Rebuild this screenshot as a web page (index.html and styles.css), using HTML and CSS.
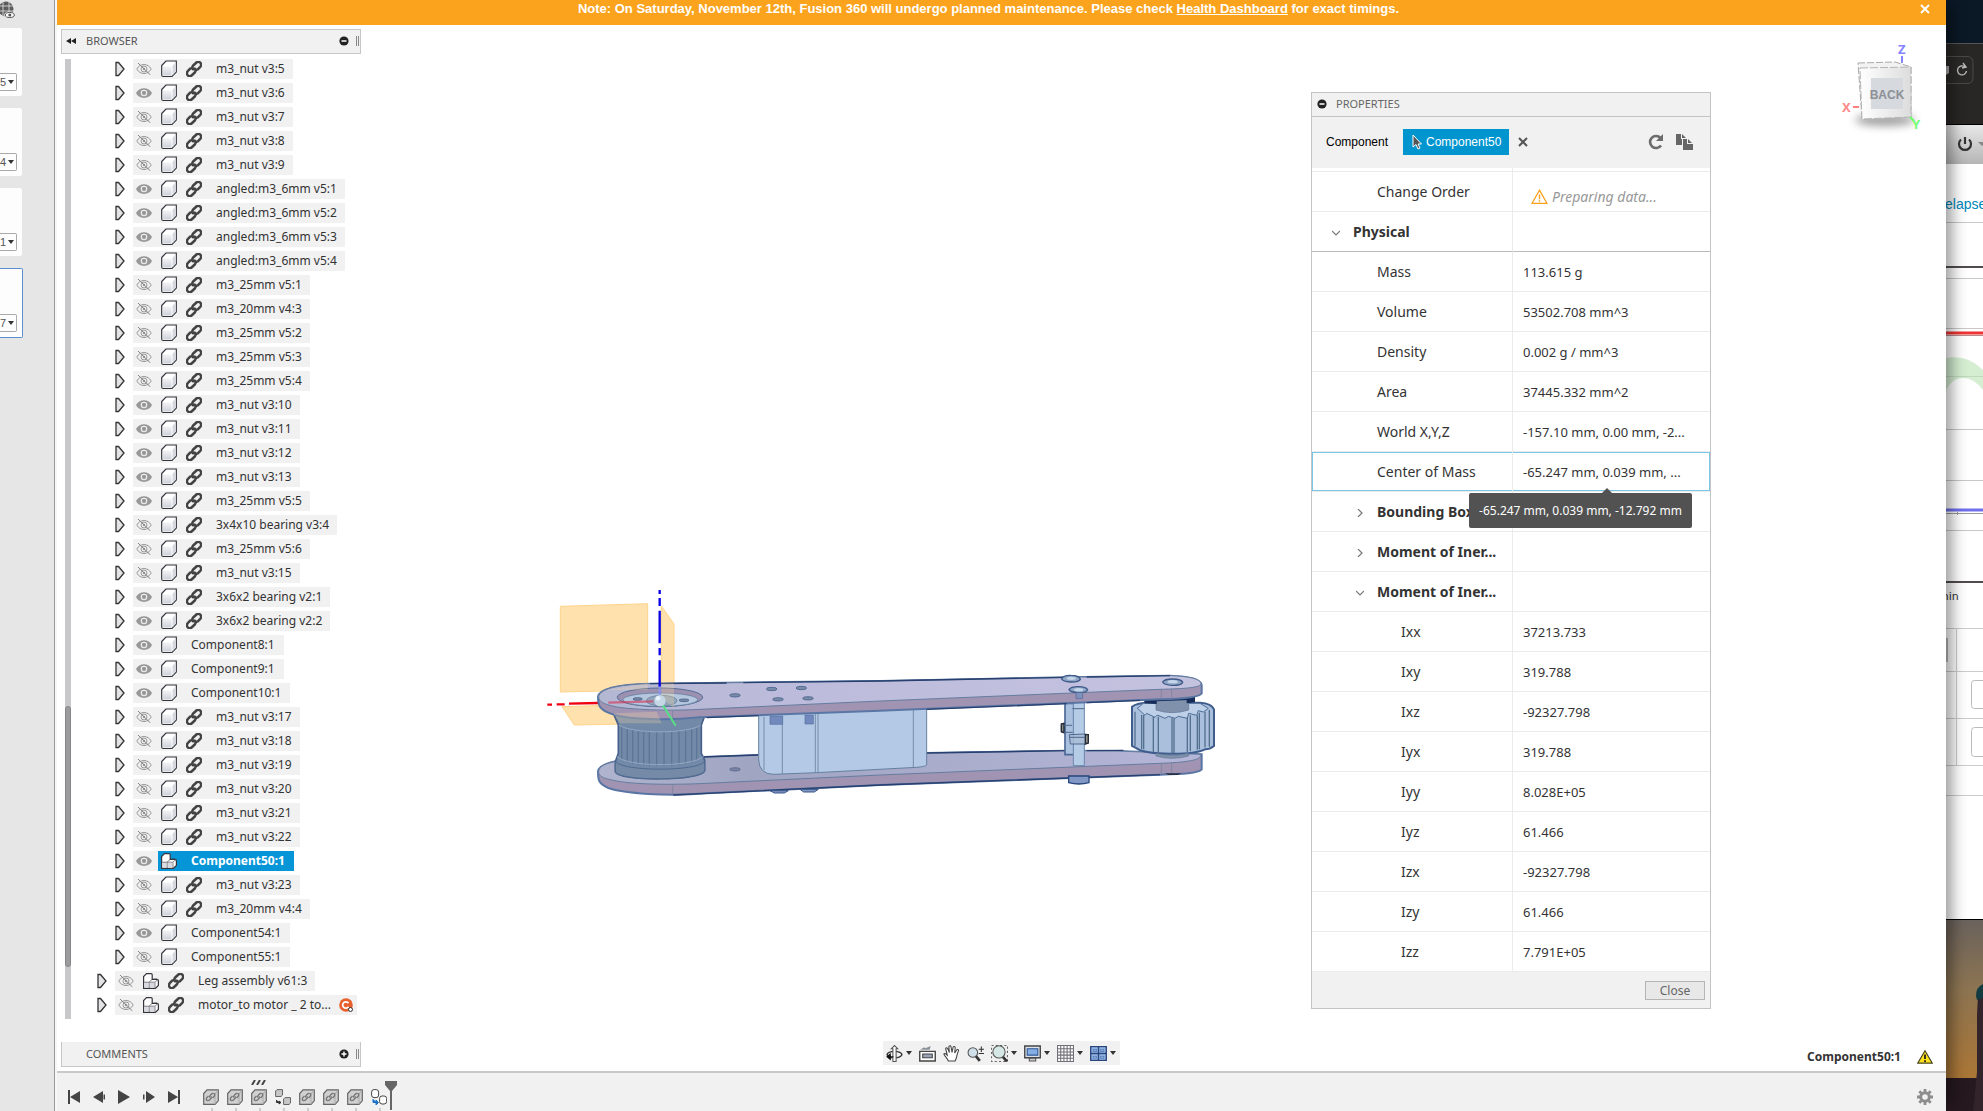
FILE: index.html
```html
<!DOCTYPE html>
<html lang="en">
<head>
<meta charset="utf-8">
<title>Fusion 360</title>
<link rel="stylesheet" href="styles.css">
<script src="app.js" defer></script>
</head>
<body>
<svg class="defs" aria-hidden="true">
  <linearGradient id="gCube" x1="0" y1="0" x2="0" y2="1"><stop offset="0" stop-color="#f4f4f6"/><stop offset="1" stop-color="#cfd1da"/></linearGradient>
  <linearGradient id="gTop" x1="0" y1="0" x2="1" y2="0"><stop offset="0" stop-color="#b3b7d2"/><stop offset=".3" stop-color="#bdbbdb"/><stop offset="1" stop-color="#c3c2df"/></linearGradient>
  <linearGradient id="gLow" x1="0" y1="0" x2="1" y2="0"><stop offset="0" stop-color="#b0b4cf"/><stop offset=".25" stop-color="#a0a5c2"/><stop offset="1" stop-color="#b6b6d8"/></linearGradient>
  <linearGradient id="gFace" x1="0" y1="0" x2="1" y2="0"><stop offset="0" stop-color="#fff"/><stop offset="1" stop-color="#dcdcdc"/></linearGradient>
  <linearGradient id="gSky" x1="0" y1="0" x2="0" y2="1"><stop offset="0" stop-color="#6a625c"/><stop offset=".35" stop-color="#8c7452"/><stop offset=".8" stop-color="#a97637"/><stop offset="1" stop-color="#b5802f"/></linearGradient>
  <symbol id="i-arrow" viewBox="0 0 10 16"><path d="M1 1.500h2.500L9 8l-5.500 6.500H1z" fill="#e4e4e6" stroke="#333" stroke-width="1.300"/></symbol>
  <symbol id="i-eye" viewBox="0 0 16 12"><path d="M0 6C3-.5 13-.5 16 6 13 12.500 3 12.500 0 6z" fill="#989898"/><circle cx="8" cy="6" r="2.700" fill="none" stroke="#f1f1f1" stroke-width="1.100"/></symbol>
  <symbol id="i-eyeoff" viewBox="0 0 16 12"><path d="M.8 6C4 0 12 0 15.200 6 12 12 4 12 .8 6z" fill="none" stroke="#999"/><circle cx="8" cy="6" r="3" fill="none" stroke="#999"/><circle cx="8" cy="6" r="1.200" fill="#999"/><path d="M2 0l12.500 12" stroke="#858585"/></symbol>
  <symbol id="i-cube" viewBox="0 0 16 18"><path d="M.7 5.500L5 1h10.300v11L11 16.500H2.200Q.7 16.500.7 15z" fill="#fff" stroke="#35353d" stroke-width="1.200"/><path d="M2 6.500h8.500V15.500H2z" fill="url(#gCube)"/><path d="M11.500 6L15 2v9.500l-3.500 4z" fill="#d6d7df"/></symbol>
  <symbol id="i-asm" viewBox="0 0 16 16"><path d="M.6 15.400V3.500L3.500.6h4.500q1.200 0 1.200 1.200v4.500l4-.2q2.200 0 2.200 2v4.300l-3 3z" fill="#fff" stroke="#35353d" stroke-width="1.200"/><path d="M1.500 9h4v5.500h-4zM6.800 9.800h4.700v5H6.800z" fill="#d9dae2"/><path d="M1 9.200h5L9 6.500M6.200 15V9.200h5.600l3-2.500M12 9.500V15" fill="none" stroke="#66666e" stroke-width=".8"/></symbol>
  <symbol id="i-link" viewBox=".6 .6 14.800 14.800"><g fill="none" stroke="#434343" stroke-width="2.300" stroke-linecap="round"><path d="M7.200 8.300C6 6.800 6.500 5.500 7.500 4.500L10 2.200C12.500 0 16.200 3 13.800 6L11.500 8.300 9.800 8.800"/><path d="M8.800 7.700C10 9.200 9.500 10.500 8.500 11.500L6 13.800C3.500 16-.2 13 2.200 10L4.500 7.700 6.200 7.200"/></g></symbol>
  <symbol id="i-feat" viewBox="0 0 16 16"><path d="M.7 4.500L4 .8h11.300v11L12 15.300H.7z" fill="#d0d0d0" stroke="#666" stroke-width="1.200"/><path d="M12 15V5l3-4" fill="none" stroke="#aaa"/><path d="M7 8.500c-1-1 0-2 1-3 2.500-2.500 5 0 3 2L9.500 9M8 7.500c1 1 0 2-1 3-2.500 2.500-5 0-3-2L5.500 7" fill="none" stroke="#777" stroke-width="1.400"/></symbol>
  <symbol id="i-minus" viewBox="0 0 10 10"><circle cx="5" cy="5" r="4.600" fill="#222"/><path d="M2.500 5h5" stroke="#fff" stroke-width="1.500"/></symbol>
  <symbol id="i-plus" viewBox="0 0 10 10"><circle cx="5" cy="5" r="4.600" fill="#222"/><path d="M2.500 5h5M5 2.500v5" stroke="#fff" stroke-width="1.400"/></symbol>
  <symbol id="i-down" viewBox="0 0 8 8"><path d="M0 2l4 4 4-4" fill="none" stroke="#777" stroke-width="1.200"/></symbol>
  <symbol id="i-right" viewBox="0 0 8 8"><path d="M2 0l4 4-4 4" fill="none" stroke="#777" stroke-width="1.200"/></symbol>
</svg>

<div class="desk">
  <aside class="pages">
    <svg class="globe" viewBox="0 0 15 18"><circle cx="6" cy="9" r="7.500" fill="#5c5c5c"/><path d="M-2 6h16M-2 11h16M3 0v18M9 0v18" stroke="#e6e6e6" fill="none" stroke-width=".8"/><ellipse cx="9.500" cy="15" rx="5.500" ry="3.500" fill="#e6e6e6"/><ellipse cx="9.800" cy="15" rx="4.500" ry="2.500" fill="#fff" stroke="#555"/><circle cx="9.800" cy="15" r="1.500" fill="#555"/></svg>
    <div class="page"><button>5<i></i></button></div>
    <div class="page"><button>4<i></i></button></div>
    <div class="page"><button>1<i></i></button></div>
    <div class="page current"><button>7<i></i></button></div>
  </aside>

  <main class="app">
    <div class="banner">
      <p>Note: On Saturday, November 12th, Fusion 360 will undergo planned maintenance. Please check <a href="#">Health Dashboard</a> for exact timings.</p>
      <button aria-label="Dismiss"><svg viewBox="0 0 10 10"><path d="M1 1l8 8M9 1L1 9" stroke="#fff" stroke-width="2"/></svg></button>
    </div>

    <div class="workspace">
      <section class="browser">
        <header class="bar">
          <svg class="rew" viewBox="0 0 10 6"><path d="M5 0v6L0 3zM10 0v6L5 3z" fill="#222"/></svg>
          <h2>BROWSER</h2>
          <svg class="dot"><use href="#i-minus"/></svg><span class="grip"></span>
        </header>
        <div class="treewrap">
          <div class="scroll"><div class="above"></div><div class="thumb"></div><div class="below"></div></div>
          <ul class="tree" id="tree"></ul>
        </div>
        <footer class="bar comments">
          <h2>COMMENTS</h2>
          <svg class="dot"><use href="#i-plus"/></svg><span class="grip"></span>
        </footer>
      </section>

      <svg class="model" viewBox="0 0 2070 690">
        <g fill="#ffdc9f" fill-opacity=".85" stroke="#ffd48a" stroke-width="3"><path d="M61 79L323 71V330L61 336z"/><path d="M364 78L402 132V385L364 350z"/><path d="M66 380L330 372 365 430 103 435z"/></g>
        <path d="M22 374h14M50 373h24M87 371L175 369" stroke="#f00010" stroke-width="7"/>
        <!-- lower plate -->
        <path d="M174 575C176 545 240 532 490 531L655 525 1160 519 1580 512 1730 513 1985 523V568C1975 580 1930 582 1860 584L1020 615 500 640C380 650 250 640 205 624 175 610 174 600 174 575z" fill="#a194b2" stroke="#5a76a4" stroke-width="6"/>
        <path d="M176 575C178 545 240 532 490 531L655 525 1160 519 1580 512 1730 513 1980 523C1990 540 1940 547 1860 550L1020 585 500 610C380 616 270 612 225 602 190 595 176 590 176 575z" fill="url(#gLow)" stroke="#657d9f" stroke-width="3"/>
        <path d="M490 531L655 525M1160 519L1580 512M1640 512L1750 511M400 645L500 640 1020 615 1860 584" fill="none" stroke="#27406f" stroke-width="4"/>
        <path d="M398 613v30M1864 550v31M1895 548v31" stroke="#75829c" stroke-width="2"/>
        <ellipse cx="585" cy="568" rx="16" ry="5" fill="#7a83a4" stroke="#4d5c82" stroke-width="2"/>
        <path d="M690 632h55l-12 7h-30zM780 628h55l-12 8h-32z" fill="#8196c0" stroke="#38558a" stroke-width="3"/>
        <!-- drive pulley -->
        <path d="M222 405L235 435V520L226 545V575C235 605 485 603 494 572V540L484 520V435L495 405z" fill="#7289a8" stroke="#46618b" stroke-width="5"/>
        <path d="M226 545C250 575 470 575 494 545V572C485 603 235 605 226 575z" fill="#748aa7" stroke="#506c90" stroke-width="3"/>
        <path d="M245 440V540M262 447V546M278 450V551M295 452V554M311 454V556M328 455V557M350 456V558M372 456V558M395 455V557M417 453V555M437 450V552M455 447V547M470 442V540" stroke="#5d7696" stroke-width="4"/>
        <path d="M238 436C280 462 440 462 482 436M230 530C270 562 450 562 490 530" fill="none" stroke="#93a8c4" stroke-width="3"/>
        <!-- motor body -->
        <path d="M656 405L1160 385V555Q1155 560 1130 562L830 578 700 583Q658 582 656 540z" fill="#b3c9e5" stroke="#66809f" stroke-width="3"/>
        <path d="M672 410V570M727 407V582M826 402V578M834 402V578M1120 388V562" stroke="#6b839f" stroke-width="2.500"/>
        <path d="M690 408h38v25h-38zM795 405h25v27h-25z" fill="#7289bd" stroke="#556fa5" stroke-width="2"/>
        <!-- standoffs -->
        <g transform="translate(1020 180)">
          <path d="M555 190h28v154h-28z" fill="#a9c0df" stroke="#4c6895" stroke-width="5"/>
          <path d="M580 185h33v192h-33z" fill="#b5cce6" stroke="#6c86aa" stroke-width="3"/>
          <path d="M544 252l8-2v28l-8-3zM568 284l48-2 9 2v25l-9 3h-45z" fill="#a9bcd6" fill-opacity=".8" stroke="#4f698f" stroke-width="3"/>
          <path d="M544 252l8-2v28l-8-3zM616 284l9 0v25l-9 3z" fill="#8d8b82" stroke="#222b38" stroke-width="4"/>
          <path d="M552 256h24M552 277h26M577 206h36M568 292h48" stroke="#51688a" stroke-width="3"/>
          <path d="M566 408h61v20q-30 8-61 0z" fill="#8298c4" stroke="#26457c" stroke-width="4"/>
          <!-- idler pulley -->
          <path d="M756 200Q770 188 810 188H960Q995 190 1002 208V318Q990 328 975 328C940 346 800 346 770 325L756 318z" fill="#a9bfdc" stroke="#3f5d8c" stroke-width="6"/>
          <path d="M772 205L790 190H960L985 205 970 216 955 212 950 226 926 220 922 235 895 229 885 235 865 229 855 235 832 225 825 232 800 220 795 226 780 212z" fill="#bdd0e8" stroke="#506d95" stroke-width="3"/>
          <path d="M765 215V318M785 225V327M791 225V328M820 230V335M835 230V337M876 235V339M882 235V339M922 233V336M931 226V334M952 226V329M958 218V328M975 215V322M988 210V320" stroke="#54708f" stroke-width="4"/>
          <path d="M828 180h98v30q-50 16-98 0zM828 340q50 12 98 0v8q-50 14-98 0z" fill="#8091ab" stroke="#5d7596" stroke-width="2"/>
          <path d="M790 178L945 170V186L920 190V180L830 184V192L795 190z" fill="#162b58"/>
          <path d="M855 400h50l-12 5h-28z" fill="#262f44"/>
        </g>
        <!-- upper plate -->
        <path d="M174 350C178 325 240 313 330 311L1020 303 1580 292 1890 287C1950 289 1983 297 1985 315V340C1980 352 1930 356 1860 358L1020 392 480 412C380 422 270 418 225 405 180 392 174 380 174 350z" fill="#a194b2" stroke="#5a76a4" stroke-width="6"/>
        <path d="M176 350C180 325 240 313 330 311L1020 303 1580 292 1890 287C1950 289 1983 297 1983 312 1978 324 1930 326 1860 328L1020 363 480 388C380 394 270 388 225 380 190 372 176 365 176 350z" fill="url(#gTop)" stroke="#657d9f" stroke-width="3"/>
        <path d="M330 311L560 309M610 308L1020 303 1580 292M1640 291L1890 287M500 413L655 407M1160 388L1580 371M1640 368L1800 361" fill="none" stroke="#27406f" stroke-width="4"/>
        <path d="M398 390v27M1864 328v30M1895 326v30" stroke="#75829c" stroke-width="2"/>
        <ellipse cx="360" cy="352" rx="128" ry="28" fill="#9c91b0" stroke="#526b94" stroke-width="3"/>
        <ellipse cx="361" cy="359" rx="112" ry="20" fill="#b4c7df" stroke="#5c7799" stroke-width="2"/>
        <ellipse cx="365" cy="362" rx="46" ry="16" fill="#92a5bc" stroke="#607794" stroke-width="2"/>
        <g fill="#798ba7" stroke="#47618a" stroke-width="2.500"><ellipse cx="293" cy="357" rx="14" ry="4"/><ellipse cx="432" cy="361" rx="15" ry="4"/><ellipse cx="585" cy="346" rx="16" ry="5"/><ellipse cx="695" cy="327" rx="16" ry="5"/><ellipse cx="784" cy="324" rx="16" ry="5"/><ellipse cx="714" cy="358" rx="16" ry="5"/><ellipse cx="804" cy="355" rx="16" ry="5"/></g>
        <g fill="#92a7c6" stroke="#3d5988" stroke-width="4"><path d="M1565 297q5-12 28-11 24 0 28 12-5 9-30 8-22-1-26-9z"/><path d="M1587 329q5-9 28-9 24 0 28 10-5 9-30 8-22-1-26-9z"/><path d="M1868 306q5-9 30-9 26 0 30 10-5 10-32 9-24-1-28-10z"/></g>
        <g fill="#c3d5e8"><ellipse cx="1594" cy="295" rx="14" ry="5"/><ellipse cx="1616" cy="329" rx="14" ry="5"/><ellipse cx="1898" cy="305" rx="15" ry="5"/></g>
        <path d="M1608 338v18h20v-18" fill="#7e91bd" stroke="#4f6797" stroke-width="2"/>
        <g fill="#ffe0a0" fill-opacity=".25"><path d="M200 330L323 310V330zM364 310H402V385L364 350zM220 400L350 395 365 430H240z"/></g>
        <path d="M205 368L340 364" stroke="#d43a5c" stroke-opacity=".65" stroke-width="7"/>
        <path d="M359 30v12M359 54v24M359 92V190M359 204V226M359 241V320" stroke="#0a00e6" stroke-width="7"/><path d="M359 320v28" stroke="#8b96ef" stroke-width="6"/>
        <path d="M365 370L407 437" stroke="#55e282" stroke-width="6"/>
        <circle cx="360" cy="362" r="17" fill="#c5d6e4"/><circle cx="354" cy="355" r="7" fill="#e8f1f7"/>
      </svg>

      <svg class="viewcube" viewBox="0 0 90 96" role="img" aria-label="View cube, back">
        <defs><filter id="soft" x="-30%" y="-80%" width="160%" height="260%"><feGaussianBlur stdDeviation="4"/></filter></defs>
        <ellipse cx="44" cy="79" rx="30" ry="6" fill="#777" opacity=".7" filter="url(#soft)"/>
        <path d="M17 22l37-1 16 5v50l-49 2z" fill="#f2f2f2" stroke="#aaa" stroke-dasharray="7 2"/>
        <path d="M19 27l51-1v50l-49 2z" fill="url(#gFace)" stroke="#b5b5b5" stroke-dasharray="8 2"/>
        <path d="M30 37h32v31H30z" fill="#d6d9de"/>
        <text x="46" y="58" text-anchor="middle" class="cube-label">BACK</text>
        <path d="M61 15v7" stroke="#8484ff" stroke-width="2"/><path d="M12 66h6" stroke="#ff8080" stroke-width="2"/><path d="M69 76l4 4" stroke="#6f6" stroke-width="2"/>
        <text x="57" y="13" class="axis" fill="#8484ff">Z</text><text x="1" y="71" class="axis" fill="#ff8b8b">X</text><text x="71" y="88" class="axis" fill="#75ff75">Y</text>
      </svg>

      <section class="props">
        <header><svg class="dot"><use href="#i-minus"/></svg><h2>PROPERTIES</h2></header>
        <div class="select-row">
          <span class="lbl">Component</span>
          <button class="picked"><svg viewBox="0 0 10 16"><path d="M1 1v12l3-2.500L6 15l2-1-2-4h3.500z" fill="#555" stroke="#fff"/></svg>Component50</button>
          <button class="ico" aria-label="Clear"><svg viewBox="0 0 10 10" width="10" height="10"><path d="M1 1l8 8M9 1L1 9" stroke="#555" stroke-width="2"/></svg></button>
          <span class="fill"></span>
          <button class="ico" aria-label="Refresh"><svg viewBox="0 0 16 16" width="16" height="16"><path d="M12.500 4A6 6 0 1 0 13 11.500" fill="none" stroke="#6b6b6b" stroke-width="2.600"/><path d="M15 0v7H8z" fill="#6b6b6b"/></svg></button>
          <button class="ico" aria-label="Copy"><svg viewBox="0 0 17 17" width="17" height="17"><path d="M0 1h5v5h1v6H0zM6 1l4 4H6z" fill="#666"/><path d="M7 6h4v5h6v6H7zM12 6l4 4h-4z" fill="#666"/></svg></button>
        </div>
        <table>
          <tbody>
            <tr class="clipped"><th></th><td></td></tr>
            <tr><th>Change Order</th><td><span class="prep"><svg viewBox="0 0 16 14"><path d="M8 1l7 12.400H1z" fill="none" stroke="#f9a11b" stroke-width="1.200"/><path d="M8 5v4.500M8 10.500v1.500" stroke="#f9a11b" stroke-width="1.300"/></svg>Preparing data...</span></td></tr>
            <tr class="group top"><th><svg><use href="#i-down"/></svg>Physical</th><td></td></tr>
            <tr><th>Mass</th><td>113.615 g</td></tr>
            <tr><th>Volume</th><td>53502.708 mm^3</td></tr>
            <tr><th>Density</th><td>0.002 g / mm^3</td></tr>
            <tr><th>Area</th><td>37445.332 mm^2</td></tr>
            <tr><th>World X,Y,Z</th><td>-157.10 mm, 0.00 mm, -2...</td></tr>
            <tr class="active"><th>Center of Mass</th><td>-65.247 mm, 0.039 mm, ...<span class="tip" role="tooltip">-65.247 mm, 0.039 mm, -12.792 mm</span></td></tr>
            <tr class="group"><th><svg><use href="#i-right"/></svg>Bounding Box</th><td></td></tr>
            <tr class="group"><th><svg><use href="#i-right"/></svg>Moment of Iner...</th><td></td></tr>
            <tr class="group"><th><svg><use href="#i-down"/></svg>Moment of Iner...</th><td></td></tr>
            <tr class="sub"><th>Ixx</th><td>37213.733</td></tr>
            <tr class="sub"><th>Ixy</th><td>319.788</td></tr>
            <tr class="sub"><th>Ixz</th><td>-92327.798</td></tr>
            <tr class="sub"><th>Iyx</th><td>319.788</td></tr>
            <tr class="sub"><th>Iyy</th><td>8.028E+05</td></tr>
            <tr class="sub"><th>Iyz</th><td>61.466</td></tr>
            <tr class="sub"><th>Izx</th><td>-92327.798</td></tr>
            <tr class="sub"><th>Izy</th><td>61.466</td></tr>
            <tr class="sub"><th>Izz</th><td>7.791E+05</td></tr>
          </tbody>
        </table>
        <footer><button class="close">Close</button></footer>
      </section>

      <nav class="navbar">
        <button aria-label="Orbit"><svg viewBox="0 0 16 16"><ellipse cx="8" cy="9" rx="7" ry="3" fill="none" stroke="#333" stroke-width="1.300"/><path d="M6.500 15.500V3.500H5L8 .5l3 3H9.500v12z" fill="#fff" stroke="#555"/><path d="M1 11h6M1 11l3-2.500v5z" fill="#111" stroke="#111"/></svg><i></i></button>
        <button aria-label="Look at"><svg viewBox="0 0 16 16"><path d="M.7 6h14.600v9H.7z" fill="#fff" stroke="#444" stroke-width="1.300"/><path d="M3.500 8.500h9V12h-9z" fill="#9aa3b8" stroke="#444"/><path d="M1 4.500L5 2l1 1 5-2-1 3.500z" fill="#8b8f99"/></svg></button>
        <button aria-label="Pan"><svg viewBox="0 0 16 16"><path d="M5 15C4 12 1 10 .8 8.500 1.500 7.500 3 8.500 4 9.500L2.500 3.500C3 2 4 2.500 4.500 3.500L6 7 5.500 1.500C6 .3 7.300.5 7.500 1.500L8.500 7l1-5c.5-1 2-.8 2 .3L11 7.500l2-3c1-.7 2 0 1.500 1L13 10c0 2-1 3-1.500 5z" fill="#fff" stroke="#444"/></svg></button>
        <button aria-label="Zoom"><svg viewBox="0 0 16 16"><path d="M8 10l4 5" stroke="#333" stroke-width="2.500"/><circle cx="5.500" cy="7" r="4.500" fill="#cfe0ea" stroke="#555"/><path d="M11 4h5M13.500 1.500v5M11 8h5" stroke="#333"/></svg></button>
        <button aria-label="Fit"><svg viewBox="0 0 16 16"><path d="M.5.5h15v15H.5z" fill="none" stroke="#666" stroke-dasharray="2 2"/><path d="M11 11l4 4.500" stroke="#333" stroke-width="2.500"/><circle cx="7.500" cy="6.500" r="5.800" fill="#d6e8e6" stroke="#555"/></svg><i></i></button>
        <button aria-label="Display"><svg viewBox="0 0 16 16"><path d="M.7 1h14.600v11H.7z" fill="#dde1e8" stroke="#444" stroke-width="1.300"/><path d="M3 3.500h10v6H3z" fill="#84aee4" stroke="#2c5595"/><path d="M5 12.500h6V15H5z" fill="#ccc" stroke="#555"/></svg><i></i></button>
        <button aria-label="Grid"><svg viewBox="0 0 16 16"><path d="M.5.500h15v15H.5z" fill="#fff"/><path d="M.5.500h15v15H.5zM3.500.500v15M6.500.500v15M9.500.500v15M12.500.500v15M.5 3.500h15M.5 6.500h15M.5 9.500h15M.5 12.500h15" fill="none" stroke="#707078"/></svg><i></i></button>
        <button aria-label="Viewports"><svg viewBox="0 0 16 16"><path d="M.7 1.500h14.600v13H.7z" fill="#9dbdea" stroke="#28457c" stroke-width="1.300"/><path d="M8 1.500v13M.7 8h14.600" stroke="#28457c" stroke-width="1.400"/><path d="M3 4h3v2H3zM10 4h3v2h-3zM3 10.500h3v2H3zM10 10.500h3v2h-3z" fill="none" stroke="#5c84c0"/></svg><i></i></button>
      </nav>

      <div class="status"><span>Component50:1</span>
        <svg viewBox="0 0 16 14"><path d="M8 .8l7.300 12.400H.7z" fill="#ffe11c" stroke="#4a4620" stroke-width="1.200"/><path d="M8 4.500v4.500M8 10.300v1.700" stroke="#222" stroke-width="1.800"/></svg>
      </div>
    </div>

    <div class="timeline">
      <div class="play">
        <button aria-label="Start"><svg viewBox="0 0 12 14"><path d="M0 0h2v14H0zM12 1v12L2 7z"/></svg></button>
        <button aria-label="Back"><svg viewBox="0 0 12 14"><path d="M10 1v12L0 7zM10.500 4.500h1.500v5h-1.500z"/></svg></button>
        <button aria-label="Play"><svg viewBox="0 0 12 14"><path d="M0 0v14l12-7z"/></svg></button>
        <button aria-label="Forward"><svg viewBox="0 0 12 14"><path d="M0 4.500h1.500v5H0zM3 1v12l9-6z"/></svg></button>
        <button aria-label="End"><svg viewBox="0 0 12 14"><path d="M10 0h2v14h-2zM0 1v12l10-6z"/></svg></button>
      </div>
      <div class="features">
        <span><svg><use href="#i-feat"/></svg></span>
        <span><svg><use href="#i-feat"/></svg></span>
        <span><svg><use href="#i-feat"/></svg><svg class="ticks" viewBox="0 0 16 5"><path d="M1 5l3-5M6 5l3-5M11 5l3-5" stroke="#444" stroke-width="2"/></svg></span>
        <span><svg viewBox="0 0 16 16"><path d="M.6 2L2 .600h5.500v5.500L6 7.500H.6zM8.600 10L10 8.600h5.500v5.500L14 15.500H8.600z" fill="#c6c6c6" stroke="#666"/><path d="M1.500 11v2.500H5M4 12l2 1.500-2 1.500z" fill="#333" stroke="#333"/></svg></span>
        <span><svg><use href="#i-feat"/></svg></span>
        <span><svg><use href="#i-feat"/></svg></span>
        <span><svg><use href="#i-feat"/></svg></span>
        <span><svg viewBox="0 0 16 16"><rect x=".6" y=".6" width="7" height="8" rx="2.500" fill="#fff" stroke="#444"/><rect x="8.600" y="7" width="7" height="8" rx="2.500" fill="#fff" stroke="#444"/><path d="M2 10v3.500h4M5 11l2.500 2.500L5 16z" fill="#1b72c6" stroke="#1b72c6"/></svg></span>
      </div>
      <svg class="marker" viewBox="0 0 12 29"><path d="M0 0h12v4L7 10v19H5V10L0 4z" fill="#666"/></svg>
      <button class="gear" aria-label="Timeline settings"><svg viewBox="0 0 16 16"><circle cx="8" cy="8" r="4.300" fill="none" stroke="#8d8d8d" stroke-width="3"/><path d="M8 0v3M8 13v3M0 8h3M13 8h3M2.300 2.300l2 2M11.700 11.700l2 2M13.700 2.300l-2 2M2.300 13.700l2-2" stroke="#8d8d8d" stroke-width="2.800"/></svg></button>
    </div>
  </main>

  <aside class="behind">
    <div class="dark"></div>
    <div class="toolbar"><svg viewBox="0 0 37 28" width="37" height="28"><path d="M-9 .5H21q6 0 6 6v15q0 6-6 6H-9z" fill="#2b2928" stroke="#4a4a4a"/><path d="M-2 10h5v7l-3 2z" fill="#aaa"/><path d="M19 11a4.500 4.500 0 1 0 1.500 4M17 7l3 4-4 1" fill="none" stroke="#bbb" stroke-width="1.400"/></svg></div>
    <div class="chrome"><svg viewBox="0 0 37 16" width="37" height="16"><path d="M15 3.500a6 6 0 1 0 8 0" fill="none" stroke="#333" stroke-width="2.200"/><path d="M19 1v7" stroke="#333" stroke-width="2.200"/><path d="M32 6h8l-4 4z" fill="#888"/></svg></div>
    <div class="site">
      <a href="#">elapse</a>
      <svg class="chart" viewBox="0 222 37 361" width="37" height="361">
        <path d="M0 222.500h37M0 278.500h37M0 328.500h37M0 429.500h37M0 480.500h37M0 530.500h37" stroke="#c8c8c8"/>
        <path d="M0 267h37M0 582h37" stroke="#504c50" stroke-width="2"/>
        <path d="M0 358Q22 354 37 370V390Q28 378 17 378 6 378 0 390z" fill="#d5eed2"/><path d="M0 376.500h37" stroke="#c0d8be"/>
        <path d="M0 333h37" stroke="#ee3434" stroke-width="3"/><path d="M0 335.500h37" stroke="#b88"/>
        <path d="M0 510h37" stroke="#7070ee" stroke-width="3"/><path d="M0 513.500h37M11.500 512v3" stroke="#999"/>
      </svg>
      <p>min</p>
      <svg class="cells" viewBox="0 628 37 170" width="37" height="170"><path d="M0 628.500h37M0 671.500h37M0 718.500h37M0 765.500h37M0 795.500h37M10.500 628v137" stroke="#ccc"/><rect x="25.500" y="680.500" width="30" height="28" rx="3" fill="#fff" stroke="#bbb"/><rect x="25.500" y="727.500" width="30" height="29" rx="3" fill="#fff" stroke="#bbb"/><path d="M0 638h2v24H0z" fill="#bbb"/></svg>
    </div>
    <svg class="photo" viewBox="0 0 37 192" preserveAspectRatio="xMidYMin slice"><path d="M0 0h37v192H0z" fill="url(#gSky)"/><path d="M0 158h37v34H0z" fill="#26191f"/><path d="M27 192l4-40V95l1-20h5v117z" fill="#32242a"/><path d="M30 76q0-9 7-12v14l-6 2z" fill="#123b42"/></svg>
  </aside>
</div>
</body>
</html>
```
FILE: app.js
```js
// Component tree: "shown" is visible in the model, "linked" is an external reference.
const nodes = [];
const add = (name, shown, linked = true, extra = {}) => nodes.push({ name, shown, linked, ...extra });
add('m3_nut v3:5', 0);
add('m3_nut v3:6', 1);
add('m3_nut v3:7', 0);
add('m3_nut v3:8', 0);
add('m3_nut v3:9', 0);
[1, 2, 3, 4].forEach(n => add('angled:m3_6mm v5:' + n, 1));
add('m3_25mm v5:1', 0);
add('m3_20mm v4:3', 0);
[2, 3, 4].forEach(n => add('m3_25mm v5:' + n, 0));
[10, 11, 12, 13].forEach(n => add('m3_nut v3:' + n, 1));
add('m3_25mm v5:5', 1);
add('3x4x10 bearing v3:4', 0);
add('m3_25mm v5:6', 0);
add('m3_nut v3:15', 0);
add('3x6x2 bearing v2:1', 1);
add('3x6x2 bearing v2:2', 1);
[8, 9, 10].forEach(n => add('Component' + n + ':1', 1, false));
[17, 18, 19, 20, 21, 22].forEach(n => add('m3_nut v3:' + n, 0));
add('Component50:1', 1, false, { asm: true, selected: true });
add('m3_nut v3:23', 0);
add('m3_20mm v4:4', 0);
add('Component54:1', 1, false);
add('Component55:1', 0, false);
add('Leg assembly v61:3', 0, true, { asm: true, outer: true });
add('motor_to motor _ 2 to...', 0, true, { asm: true, outer: true, alert: true });

const icon = (id, cls) => `<svg class="${cls}"><use href="#i-${id}"/></svg>`;
const alertIcon = '<svg class="alert" viewBox="0 0 14 14"><circle cx="7" cy="7" r="6.800" fill="#e8602c"/><path d="M9.500 5.200a3.200 3.200 0 1 0 0 3.600" fill="none" stroke="#fff" stroke-width="1.800"/><circle cx="11.500" cy="11.500" r="2" fill="#fff" stroke="#333"/></svg>';
document.getElementById('tree').innerHTML = nodes.map(n => `
  <li class="${n.outer ? 'outer' : ''}${n.selected ? 'selected' : ''}">
    ${icon('arrow', 'arrow')}
    <span class="vis">${icon(n.shown ? 'eye' : 'eyeoff', 'eye')}</span><span class="name${n.linked ? '' : ' local'}">${icon(n.asm ? 'asm' : 'cube', 'kind')}${n.linked ? icon('link', 'link') : ''}<span class="text">${n.name}</span>${n.alert ? alertIcon : ''}</span>
  </li>`).join('');
```
FILE: styles.css
```css
* { box-sizing: border-box; }
body { margin: 0; font-family: "Noto Sans", sans-serif; color: #333; background: #fff; }
h2, p, ul { margin: 0; padding: 0; font-weight: normal; }
button { font: inherit; padding: 0; margin: 0; border: 0; background: none; color: inherit; }
svg { display: block; flex: none; }
.defs { position: absolute; width: 0; height: 0; }
.desk { display: grid; grid-template-columns: 57px minmax(0, 1fr) 37px; min-height: 100vh; overflow: hidden; }

/* page list at the left edge */
.pages { background: #e6e6e6; border-right: 2px solid #f6f6f6; box-shadow: inset -1px 0 #999; display: flex; flex-direction: column; align-items: flex-start; gap: 12px; }
.globe { width: 15px; height: 18px; margin-bottom: -2px; }
.page { width: 22px; height: 68px; background: #fdfdfd; border-radius: 0 2px 2px 0; display: flex; align-items: flex-end; padding-bottom: 5px; }
.page.current { border: 1px solid #5b8fd0; border-left: 0; width: 23px; height: 70px; }
.page button { width: 17px; height: 18px; border: 1px solid #aaa; border-left: 0; border-radius: 0 2px 2px 0; display: flex; align-items: center; gap: 2px; font: 11px/16px "Liberation Sans", sans-serif; color: #555; }
.page i, .navbar i { width: 0; border: 3px solid transparent; border-top: 4px solid #333; border-bottom: 0; }

.app { display: flex; flex-direction: column; min-width: 0; background: #fff; position: relative; z-index: 1; box-shadow: 12px 0 14px -6px rgba(0, 0, 0, .4); }
.banner { height: 25px; background: #fca31d; color: #fff; display: flex; padding: 0 16px 0 0; }
.banner p { flex: 1; text-align: center; font: bold 13px/17px "Liberation Sans", sans-serif; }
.banner a { color: inherit; }
.banner button { width: 10px; height: 17px; }
.banner svg { width: 10px; height: 10px; }

.workspace { flex: 1; position: relative; display: flex; padding: 4px; }
.browser { width: 300px; display: flex; flex-direction: column; }
.bar { height: 25px; border: 1px solid #c6c6c6; background: #f1f1f1; display: flex; align-items: center; padding: 0 1px 1px 4px; }
.bar h2 { flex: 1; font-size: 11px; line-height: 16px; color: #555; margin-left: 10px; }
.comments { border-top: 0; padding-left: 14px; }
.dot { width: 10px; height: 10px; }
.rew { width: 10px; height: 6px; }
.grip { width: 3px; height: 10px; border: 1px solid #888; border-width: 0 1px; margin-left: 7px; }
.treewrap { flex: 1; display: flex; padding: 5px 0 23px 4px; }
.scroll { width: 6px; background: #c8c8ca; display: flex; flex-direction: column; }
.above { flex: 648; }
.thumb { flex: 259; background: #9b9b9d; border: 1px solid #858587; border-radius: 3px; }
.below { flex: 52; }
.tree { list-style: none; margin-left: 44px; flex: 1; }
.tree li { display: flex; height: 20px; margin-bottom: 4px; white-space: nowrap; }
.tree li.outer { margin-left: -18px; }
.tree li:last-child { margin-bottom: 0; }
.arrow { width: 10px; height: 16px; margin: 2px 8px 0 0; }
.vis { width: 25px; background: #f1f1f1; padding: 4px 0 0 3px; }
.eye { width: 16px; height: 12px; }
.name { background: #f1f1f1; display: flex; align-items: center; padding: 0 8px 0 3px; }
.name.local { padding-right: 9px; }
.kind { width: 16px; height: 18px; }
.link { width: 16px; height: 16px; margin-left: 9px; }
.text { font-size: 12px; line-height: 20px; margin-left: 14px; }
.alert { width: 14px; height: 14px; margin: 0 -4px 0 8px; }
.selected .name { background: #0696d7; color: #fff; font-weight: bold; }

.model { position: absolute; left: 483px; top: 555px; width: 690px; height: 230px; }
.viewcube { position: absolute; right: 15px; top: 16px; width: 90px; height: 96px; }
.cube-label { font: bold 12px "Liberation Sans", sans-serif; fill: #8c9096; }
.axis { font: bold 13px "Noto Sans", sans-serif; }

/* floating properties palette */
.props { position: absolute; right: 235px; top: 67px; width: 400px; border: 1px solid #c4c4c4; background: #f1f1f1; }
.props > header { height: 24px; border-bottom: 1px solid #c4c4c4; display: flex; align-items: center; padding: 0 0 1px 5px; }
.props h2 { font-size: 11px; line-height: 16px; color: #666; margin-left: 9px; }
.select-row { height: 51px; display: flex; align-items: center; padding: 0 17px 2px 14px; font: 12px "Liberation Sans", sans-serif; color: #000; }
.lbl { width: 77px; }
.picked { width: 106px; height: 26px; background: #0095cf; color: #fff; display: flex; align-items: center; padding-left: 9px; gap: 4px; margin-right: 9px; }
.picked svg { width: 10px; height: 16px; }
.fill { flex: 1; }
.ico + .ico { margin-left: 12px; }
table { width: 100%; table-layout: fixed; border-collapse: separate; border-spacing: 0; background: #fff; }
th, td { height: 40px; padding: 0; text-align: left; border-bottom: 1px solid #ebebeb; white-space: nowrap; line-height: 20px; }
th { width: 201px; border-right: 1px solid #ebebeb; font-weight: normal; font-size: 14px; padding-left: 65px; }
td { font-size: 13px; padding-left: 10px; position: relative; }
.clipped th, .clipped td { height: 4px; }
.group th { font-weight: bold; padding-left: 44px; }
.group svg { display: inline-block; width: 8px; height: 8px; margin-right: 13px; }
.group.top th { padding-left: 20px; }
.top th, .top td { border-bottom-color: #bbb; }
.sub th { padding-left: 89px; }
.active th { box-shadow: inset 1px 1px #79c7e8, inset 0 -1px #79c7e8; }
.active td { box-shadow: inset -1px 1px #79c7e8, inset 0 -1px #79c7e8; }
.prep { display: flex; align-items: center; gap: 4px; font-style: italic; color: #999; padding: 10px 0 0 8px; font-size: 14px; }
.prep svg { width: 17px; height: 15px; }
.tip { position: absolute; z-index: 2; left: -44px; top: 41px; width: 223px; height: 35px; border-radius: 2px; background: #525252; color: #fff; font-size: 12px; line-height: 35px; text-align: center; }
.tip::before { content: ""; position: absolute; left: 133px; top: -5px; border: 5px solid transparent; border-top: 0; border-bottom-color: #525252; }
.props footer { height: 36px; display: flex; justify-content: flex-end; align-items: center; padding-right: 5px; }
.close { width: 60px; height: 19px; border: 1px solid #b5b5b5; background: #e8e8e8; color: #666; font-size: 12px; line-height: 17px; }

.navbar { position: absolute; left: 50%; bottom: 6px; height: 24px; width: 237px; margin-left: -119px; background: #f1f1f1; display: flex; align-items: center; justify-content: space-between; padding: 0 3px; }
.navbar button { display: flex; align-items: center; gap: 3px; }
.navbar svg { width: 17px; height: 17px; }
.status { position: absolute; right: 13px; bottom: 6px; display: flex; align-items: center; gap: 16px; font-size: 12px; line-height: 16px; font-weight: bold; }
.status svg { width: 16px; height: 14px; }

.timeline { height: 41px; flex: none; background: #f1f1f1; border-top: 2px solid #c8c8c8; display: flex; align-items: center; padding: 8px 13px 0 11px; overflow: hidden; }
.play { display: flex; gap: 13px; fill: #444; }
.play svg { width: 12px; height: 14px; }
.features { display: flex; gap: 8px; margin-left: 23px; }
.features span { position: relative; }
.features span::after { content: ""; position: absolute; left: 8px; top: 19px; width: 2px; height: 5px; background: #ccc; }
.features svg { width: 16px; height: 16px; }
.features .ticks { position: absolute; top: -9px; left: 0; height: 5px; }
.marker { width: 12px; height: 29px; margin-left: -2px; align-self: flex-start; flex: none; }
.gear { margin-left: auto; }
.gear svg { width: 16px; height: 16px; }

/* windows behind the right edge */
.behind { display: flex; flex-direction: column; overflow: hidden; background: #fff; }
.dark { height: 44px; background: #0b1826; border-bottom: 1px solid #555; flex: none; }
.toolbar { height: 81px; background: #292726; border-bottom: 1px solid #000; padding-top: 12px; flex: none; }
.chrome { height: 39px; background: linear-gradient(#e8e8e8, #b5b5b5); padding-top: 11px; flex: none; }
.site { height: 756px; border-bottom: 1px solid #000; flex: none; font-family: "Liberation Sans", sans-serif; }
.site a { display: block; margin: 30px 0 8px -1px; font-size: 14px; line-height: 20px; color: #0088bb; text-decoration: none; }
.site p { font-family: "DejaVu Sans", sans-serif; font-size: 11px; line-height: 20px; margin: 4px 0 21px -8px; }
.photo { width: 37px; height: 192px; flex: 1 0 auto; }
```
